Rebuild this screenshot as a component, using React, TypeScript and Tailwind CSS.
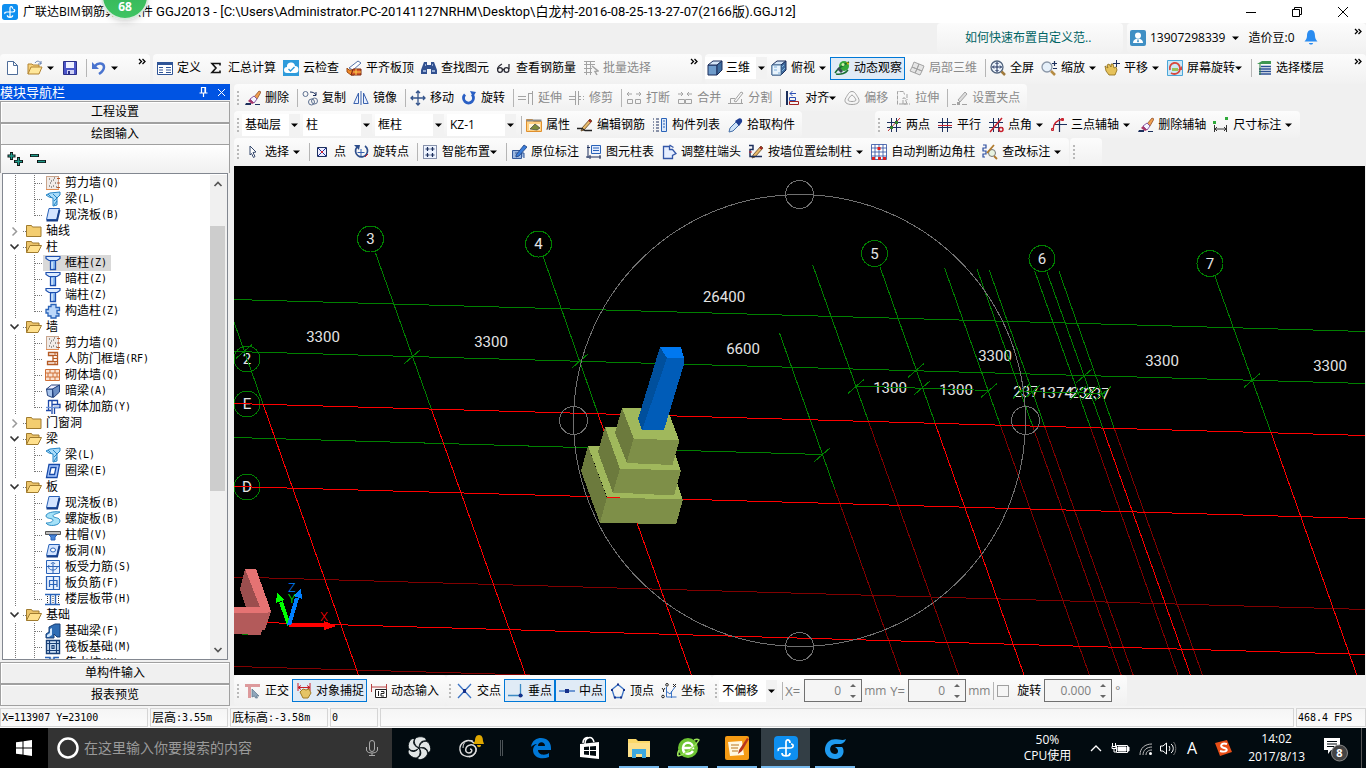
import { ReactNode, useState } from 'react';
import clsx from 'clsx';

const K = '#1c2f5c'; // navy outline used by most toolbar icons
const B = '#2a63b8';
const G = '#a3a3a3';
const R = '#c8202c';

const pencil = (
  <>
    <path d="M5 11L13 2l2 2-8 9-3 1z" fill="#e8b96a" stroke="#5a4020" strokeWidth=".8" />
    <path d="M12 3l2 2" stroke="#a02020" strokeWidth="2" />
  </>
);
const brush = (
  <>
    <path d="M9 7l5-6 2 1-4 7z" fill="#f0a050" stroke="#84411c" strokeWidth=".7" />
    <path d="M5 9l4-3 3 3-3 4z" fill="#f4f4ff" stroke="#7d4b9b" strokeWidth=".9" />
    <path d="M5 9l4 4-2 1-4-3z" fill="#a83768" />
    <path d="M1 13h5v2H0z" fill={K} />
    <path d="M10 14.500h5" stroke={K} />
  </>
);
const axes = <path d="M5.500 1v14M10.500 1v14M1 5.500h14M1 10.500h14" stroke={K} fill="none" />;
const column = (
  <>
    <path d="M5.500 5h5v9.500h-5z" fill="#8dbcf2" stroke="#1d4fae" strokeWidth="1.300" />
    <path d="M1 1.500h14v2l-3 2H4l-3-2z" fill="#dcecff" stroke="#1d4fae" strokeWidth="1.200" />
    <path d="M7 7v7" stroke="#fff" />
  </>
);
const shearWall = (
  <>
    <rect x="1.500" y="1.500" width="12" height="13" fill="#f1ebe7" stroke="#c9a58c" />
    <path d="M1 14.500h13" stroke="#e08a50" />
    <path d="M4 4h1M8 5h1M5 8h1M10 8h1M4 11h1M8 11h1M11 12h1M6 6h1M9 3h1M6 12h1" stroke="#444" />
    <path d="M12 3.500h3M12 8h3M12 12.500h3" stroke="#b5542a" />
  </>
);
const beam = (
  <>
    <path d="M1 4l4-2 10-1v3l-3 3v7l-4 1V7L4 6z" fill="#a9dcfa" stroke="#2684c4" />
    <path d="M3 3l4 4M8 3l4 4M9 10l3-3M9 14l3-4" stroke="#2684c4" />
  </>
);
const slab = (
  <>
    <path d="M4 1.500h10.500L12 12.500H1.500z" fill="#d3e4ff" stroke={B} />
    <path d="M1.500 13.500H12L14.500 3" stroke="#173f8a" strokeWidth="2" />
  </>
);
const cube = (
  <>
    <path d="M1 5h9v10H1z" fill="#6f9ccb" stroke={K} />
    <path d="M1 5l5-4h9l-5 4z" fill="#d5e6f7" stroke={K} />
    <path d="M10 5l5-4v9l-5 5z" fill="#3f6c9e" stroke={K} />
  </>
);

const icons: Record<string, ReactNode> = {
  file: <path d="M3.500 1.500h6l4 4v9h-10zM9.500 1.500v4h4" fill="#fff" stroke="#4f6d99" />,
  open: (
    <>
      <path d="M1 14V4h4l1 1h6v3" fill="#f7d27c" stroke="#b38433" />
      <path d="M1 14l3-7h11l-3 7z" fill="#ffe79a" stroke="#b38433" />
      <path d="M8 3c2-3 5-2 6 1M14 1v3h-3" fill="none" stroke="#6480b0" />
    </>
  ),
  save: (
    <>
      <path d="M1.500 1.500h13v13h-13z" fill="#4b55c8" stroke="#2b2f86" />
      <path d="M4 2h8v6H4z" fill="#eef0ff" />
      <path d="M5 10h7v4H5z" fill="#cfd2f5" />
      <path d="M6 11h2v3H6z" fill="#2b2f86" />
    </>
  ),
  undo: (
    <>
      <path d="M4 6c3-4 9-3 9 1 0 3-2 5-5 7" fill="none" stroke="#4a74cf" strokeWidth="2.500" />
      <path d="M1 2v7h7z" fill="#4a74cf" />
    </>
  ),
  define: (
    <>
      <path d="M.5 2.500h15v12H.5z" fill="#fff" stroke="#2f5597" />
      <path d="M0 2h16v3H0z" fill="#2f5597" />
      <path d="M2 7.500h4M2 10h4M2 12.500h4M9 7.500h5M9 10h5M9 12.500h5" stroke="#2f5597" />
    </>
  ),
  sigma: <path d="M12 5.500V3.500H4l4 4.500-4 4.500h8v-2" fill="none" stroke="#111" strokeWidth="1.600" />,
  cloud: (
    <>
      <path d="M0 0h16v16H0z" fill="#2e9bdb" />
      <path d="M4 13a3 3 0 010-6 4 4 0 018-1 3.500 3.500 0 010 7z" fill="#fff" />
      <path d="M5.500 9l2 2 4-4" stroke="#2e9bdb" fill="none" strokeWidth="1.400" />
    </>
  ),
  align: (
    <>
      <path d="M3 8L12 1l3 2-8 7z" fill="#fff" stroke="#5573a8" />
      <path d="M1 8v4l4 3h3v-5H3z" fill="#f28a28" stroke="#9c4b14" />
      <path d="M7 9h8v6H5z" fill="#d4572b" stroke="#7c2c12" />
      <path d="M10 9v6M7 12h8" stroke="#ffd24d" />
    </>
  ),
  find: (
    <>
      <path d="M3 2h3v3h4V2h3l3 8v4h-6V9H6v5H0v-4z" fill="#31508f" />
      <path d="M2 11h3M11 11h3M4 5h1M11 5h1" stroke="#b6c9ec" strokeWidth="1.500" />
    </>
  ),
  glasses: (
    <g fill="none" stroke="#2b2b35" strokeWidth="1.300">
      <circle cx="4" cy="10" r="2.400" />
      <circle cx="10.500" cy="10" r="2.400" />
      <path d="M1.500 9C2 6 4 5 6 4M13 9V4M6.500 9.500h2" />
    </g>
  ),
  batch: (
    <g fill="none" stroke={G}>
      <path d="M1 1.500h11M1 4.500h11M1 8.500h8M1 12.500h8M3.500 1v14M7.500 1v14" />
      <path d="M9 6l6 5-3 .5 2 3.500" strokeWidth="1.500" />
    </g>
  ),
  cube,
  topView: (
    <>
      {cube}
      <path d="M1 5h9v10H1z" fill="#e8f3fc" stroke="#4c779f" />
      <path d="M3 7h3M3 10h3M7 13h2M11 7l2-2M11 11l3-3" stroke="#7fb0dc" />
    </>
  ),
  orbit: (
    <>
      <circle cx="10" cy="6" r="5" fill="#35a83c" />
      <path d="M1 13c3-5 8-8 14-11M2 14c5 1 10-1 12-4" fill="none" stroke="#1b6e34" strokeWidth="1.500" />
      <circle cx="9" cy="4.500" r="1.500" fill="#cff3a8" />
      <path d="M3 9l4 4 2-2-4-4z" fill="#3b4a54" />
      <path d="M12 2l3 1-1 2z" fill="#e8b500" />
    </>
  ),
  localCube: (
    <g fill="#e5e5e5" stroke={G}>
      <path d="M5 2l5 2-2 5-5-2zM10 4l5 2-2 5-5-2zM3 7l5 2-2 4-5-2zM8 9l5 2-2 4-5-2z" />
    </g>
  ),
  fullscreen: (
    <>
      <circle cx="7" cy="7" r="6" fill="#eef5fc" stroke="#51637d" strokeWidth="1.300" />
      <path d="M11.500 11.500L15 15" stroke="#a07a3c" strokeWidth="2.500" />
      <path d="M7 2.500v9M2.500 7h9M5.500 4L7 2.500 8.500 4M5.500 10L7 11.500 8.500 10M4 5.500L2.500 7 4 8.500M10 5.500L11.500 7 10 8.500" stroke={K} fill="none" />
    </>
  ),
  zoom: (
    <>
      <circle cx="6" cy="7" r="5" fill="#e6f0fa" stroke="#8b97a8" strokeWidth="1.300" />
      <path d="M10 11l4 4" stroke="#b58b42" strokeWidth="2.500" />
      <path d="M11 3.500h5M13.500 1v5M12 8.500h4" stroke={K} strokeWidth="1.200" />
    </>
  ),
  pan: (
    <>
      <path d="M1 6l3 2-1-3 2-1 2 3 0-3 2 0 1 4 2-1 1 3-2 5H5L2 11z" fill="#e6c25b" stroke="#8b6914" strokeWidth=".8" />
      <path d="M12.500 0v7M9 3.500h7" stroke={K} />
    </>
  ),
  screenRotate: (
    <>
      <path d="M.5.500h15v15H.5z" fill="#cde8f7" stroke="#4aa6d8" />
      <path d="M3 10c-2-8 9-10 10-2M13 8c0 6-6 7-9 5" fill="none" stroke="#d8483e" strokeWidth="1.800" />
      <path d="M5 8h6v3H5z" fill="#9ac45a" />
      <path d="M15 6v4h-4z" fill="#d8483e" />
    </>
  ),
  floors: (
    <>
      <path d="M1 4l5-3h9v3z" fill="#3f9650" />
      <path d="M5 6.500h10M3 9h12M3 11.500h12M3 14h12" stroke="#2b4f94" strokeWidth="1.500" />
      <path d="M4 4v11" stroke="#2b7a3c" />
    </>
  ),
  brush,
  copy: (
    <g fill="none" stroke="#5d7090">
      <circle cx="3.500" cy="4" r="2.500" />
      <circle cx="9.500" cy="12" r="3" />
      <circle cx="12.500" cy="11" r="3" />
      <path d="M8 2c3 0 5 1 6 3M14 2v3.500h-3" stroke={K} />
    </g>
  ),
  mirror: (
    <g fill="none" stroke="#3b62ad">
      <path d="M5.500 3v10.500H.8zM10.500 3v10.500h4.700z" fill="#e8f0ff" />
      <path d="M8 1v14" />
    </g>
  ),
  move: <path d="M8 1v14M1 8h14M6 3l2-2 2 2M6 13l2 2 2-2M3 6L1 8l2 2M13 6l2 2-2 2" fill="none" stroke="#35558c" strokeWidth="1.300" />,
  rotate: (
    <>
      <path d="M4 4.500a5 5 0 107 0" fill="none" stroke="#2a5fc4" strokeWidth="2.800" />
      <path d="M9 1l6 1-3 5z" fill="#2a5fc4" />
    </>
  ),
  extend: <path d="M0 6.500h8M0 9.500h8M10.500 3v11M14.500 1v14M11 3.500h3" stroke={G} fill="none" />,
  trim: <path d="M0 6.500h6M0 9.500h6M6.500 1v14M9.500 1v14M10 6.500h2M10 9.500h2M14 6.500h1M14 9.500h1" stroke={G} fill="none" />,
  breakIt: <path d="M1 4h5M10 4h5M3 2L1 4l2 2M13 2l2 2-2 2M1.500 9.500h5v4h-5zM9.500 9.500h5v4h-5z" stroke={G} fill="none" />,
  merge: <path d="M1 4h5M10 4h5M4 2l2 2-2 2M12 2l-2 2 2 2M1.500 9.500h6v4h-6zM8.500 9.500h6v4h-6z" stroke={G} fill="none" />,
  split: <path d="M0 13.500h15M2.500 13V8.500H7M6 11l7-9 2 1-7 9zM13.500 9v5" stroke={G} fill="none" />,
  alignTo: (
    <g fill="none">
      <path d="M2 1v14" stroke={K} strokeWidth="2" />
      <path d="M5 3.500h6M7.500 1L5 3.500 7.500 6" stroke="#2c50b4" />
      <path d="M4.500 7.500h6v3h-6z" stroke="#2c50b4" />
      <path d="M4.500 11.500h9v3h-9z" stroke="#a02020" />
    </g>
  ),
  offset: <path d="M8 1.500c3 0 4 3 6 6 3 5-1 7-6 7s-9-2-6-7c2-3 3-6 6-6zM8 5c1 0 4 4 4 5 0 2-8 2-8 0 0-1 3-5 4-5z" stroke={G} fill="none" />,
  stretch: <path d="M2.500 14.500v-13h6l1 3M8 14V8h2l2 6zM4 14h11M12 4v6" stroke={G} fill="none" strokeDasharray="4 1" />,
  grip: (
    <>
      <path d="M0 14.500h4M10 14.500h5" stroke={G} />
      <path d="M6 10l7-8 2 2-7 8z" fill="#ddd" stroke={G} />
      <path d="M5 12h3v3H5z" fill={G} />
    </>
  ),
  props: (
    <>
      <path d="M.5 2.500h6l1 2h8v10H.5z" fill="#ffd183" stroke="#e08f2c" />
      <path d="M.5 2.500h15v2H.5z" fill="#8a8a8a" />
      <path d="M3 7h11v6H3z" fill="#fff6dd" />
      <path d="M4 12l5-5 5 4-3 2z" fill="#7d8a3c" stroke="#444" strokeWidth=".7" />
    </>
  ),
  editBar: (
    <>
      {pencil}
      <path d="M0 11.500h5l3 2h7" fill="none" stroke="#222" strokeWidth="1.300" />
    </>
  ),
  list: (
    <>
      <path d="M1 2h1M4 2h3M1 5h1M4 5h3M1 8h1M4 8h3M1 11h1M4 11h3M1 14h1M4 14h3" stroke={K} />
      <path d="M9.500 1.500h5v13h-5z" fill="#dce8f8" stroke={B} />
      <path d="M11 4h2M11 7h2M11 10h2" stroke={B} />
    </>
  ),
  pick: (
    <>
      <path d="M2 15l1-4 6-6 3 3-6 6z" fill="#cfe3f8" stroke="#456fa8" />
      <path d="M8 4l4 5 3-4c1-3-2-5-4-3z" fill="#1f3f93" />
    </>
  ),
  twoPoint: (
    <>
      {axes}
      <path d="M2 14L14 1" stroke="#c23030" />
      <path d="M4 9h3v3H4zM9 4h3v3H9z" fill="#357d2c" />
    </>
  ),
  parallel: (
    <>
      {axes}
      <path d="M1 8.500h14" stroke={R} />
    </>
  ),
  pointAngle: (
    <>
      {axes}
      <path d="M2 15L14 1" stroke={R} strokeWidth="1.500" />
      <circle cx="13" cy="12.500" r="2" fill="none" stroke={R} strokeWidth="1.500" />
    </>
  ),
  threePoint: (
    <>
      <path d="M8.500 1v14M4 7.500h12" stroke={K} strokeWidth="1.200" />
      <path d="M2 13C2 7 6 3 12 2" fill="none" stroke={R} strokeWidth="1.300" />
      <path d="M.5 11.500h2v2h-2zM10.500 1.500h2v2h-2z" fill="none" stroke={R} />
    </>
  ),
  dimension: (
    <>
      <path d="M1.500 8v7M13.500 8v7M2 12h11M4 10l-2 2 2 2M11 10l2 2-2 2" fill="none" stroke="#333" />
      <path d="M0 4h3v3H0zM12 0h3v3h-3z" fill="#2faa3a" />
    </>
  ),
  cursor: <path d="M5 2l6 6-3 .500 2 4-1.500 1-2-4L5 11z" fill="#fff" stroke="#33466b" />,
  point: (
    <>
      <path d="M3.500 3.500h9v9h-9z" fill="#eef" stroke={K} />
      <path d="M4 4l8 8M12 4l-8 8" stroke="#1c2f9c" />
      <path d="M7 7h2v2H7z" fill={R} />
    </>
  ),
  rotatePoint: (
    <>
      <path d="M4 3a6 6 0 108-1" fill="none" stroke="#2c4c8a" strokeWidth="1.700" />
      <path d="M1 1l6 0-1 5z" fill="#2c4c8a" />
      <path d="M8 5v7M4.500 8.500h7" stroke="#355fae" />
      <path d="M12 13l3-3" stroke={R} />
    </>
  ),
  smart: (
    <>
      <path d="M1.500 1.500h13v13h-13z" fill="#eef4ff" stroke={K} strokeDasharray="1 1" />
      <path d="M5.500 3v4M3.500 5h4M10.500 3v4M8.500 5h4M5.500 9v4M3.500 11h4M10.500 9v4M8.500 11h4" stroke={K} strokeWidth="1.200" />
    </>
  ),
  inPlace: (
    <>
      <path d="M1.500 6.500h9v8h-9zM4 9h9v5" fill="#9cb8e0" stroke="#345a9b" />
      <path d="M5 11l8-10 3 2-8 9-3 1z" fill="#3b7dd8" stroke="#1c3c7c" strokeWidth=".8" />
    </>
  ),
  columnTable: (
    <>
      <path d="M5.500 1.500h9v8h-9z" fill="#e3edff" stroke={B} />
      <path d="M7 4h6M7 6.500h6" stroke={B} />
      <path d="M2 1v13M1 3.500h3M0 13h15M4 11v4M14 11v4" stroke={K} />
    </>
  ),
  columnEnd: <path d="M2.500 2.500h6v3h3l3.500 4-3.500 2v3h-9zM8.500 1l4 2.500" fill="#e6eeff" stroke="#3457a8" strokeWidth="1.300" />,
  byWall: (
    <>
      {pencil}
      <path d="M1 1.500h4v4H2v7h12" fill="none" stroke={K} strokeWidth="1.500" />
      <path d="M1 8h3" stroke={R} />
    </>
  ),
  cornerColumn: (
    <>
      <path d="M.5.500h15v15H.5zM.5 4h15M.5 8h15M.5 12h15M4 .5v15M8 .5v15M12 .5v15" fill="#fff" stroke="#2b4da0" strokeWidth=".8" />
      <path d="M6.500 3h3v3h-3zM1 13h3v3H1zM7 13h3v3H7zM12 13h3v3h-3z" fill="#e02020" />
    </>
  ),
  checkMark: (
    <>
      <path d="M1 1h3v3H1v3h3v3H1v3h2" fill="none" stroke="#2b4da0" strokeWidth="1.200" />
      <circle cx="10" cy="9" r="3.500" fill="#e8f3e0" stroke="#777" />
      <path d="M12 12l3 3M5 9l7-8" stroke="#b07a2c" strokeWidth="1.800" />
    </>
  ),
  ortho: (
    <>
      <path d="M0 1h15v3H6v11H3V4H0z" fill="#dd9a9c" />
      <path d="M7 6l7 7-2.500 0 1 2-2 0-1-2L7 14z" fill="#8fa6bb" stroke="#5c7288" strokeWidth=".7" />
    </>
  ),
  snap: (
    <>
      <path d="M2 0v8M14 0v8M2 4.500h12M5 2.500L2 4.500l3 2M11 2.500l3 2-3 2" fill="none" stroke={R} />
      <path d="M4 9l3-3 3 1 3-1 2 4-3 5H7z" fill="#e5c466" stroke="#a07c26" />
    </>
  ),
  dynInput: (
    <>
      <path d="M.5 1v8M15.500 1v8M1 4h14" stroke="#b84444" />
      <path d="M4.500 6.500h11v8h-11z" fill="#fff" stroke="#222" />
      <path d="M7.500 8v5M10 8.500h3v2h-3v2.500h3" fill="none" stroke="#222" />
    </>
  ),
  cross: (
    <>
      <path d="M1 1l13 14M14 1L1 15" stroke="#3b73c4" strokeWidth="1.300" />
      <path d="M6 6h3v4H6z" fill="#15308a" />
    </>
  ),
  perpendicular: (
    <>
      <path d="M0 12.500h15M12.500 1v12" stroke="#3b8ac4" strokeWidth="1.300" />
      <circle cx="12.500" cy="12.500" r="2" fill="#15308a" />
    </>
  ),
  midpoint: (
    <>
      <path d="M0 8h16" stroke="#3b73c4" strokeWidth="1.400" />
      <path d="M6 6h4v4H6z" fill="#15308a" />
    </>
  ),
  vertex: (
    <>
      <path d="M8 1.500l6 5-2.500 8h-7L2 6.500z" fill="none" stroke="#3b73c4" strokeWidth="1.300" />
      <path d="M7 .5h2v2H7zM1 6h2v2H1zM13 6h2v2h-2zM4 13.500h2v2H4zM10 13.500h2v2h-2z" fill="#15308a" />
    </>
  ),
  coord: (
    <g fill="none" stroke="#3b73c4">
      <path d="M5.500 4v10h10M5 8l4 3 5-7M10.500 8v7" />
      <path d="M1 5l1.500 2L4 5M2.500 7v2M12 1l3 3M15 1l-3 3" stroke="#222" />
      <circle cx="6" cy="1.800" r="1.300" stroke="#222" />
      <circle cx="2" cy="13.500" r="1.300" stroke="#222" />
    </g>
  ),
  user: (
    <>
      <rect width="16" height="16" rx="2" fill="#3f8fc4" />
      <circle cx="8" cy="5.500" r="3" fill="#fff" />
      <path d="M3 13c0-6 10-6 10 0z" fill="#fff" />
      <path d="M8 8.500l1 3-1 1-1-1z" fill="#3f8fc4" />
    </>
  ),
  bell: <path d="M8 0c3 0 4 3 4 6 0 2 1 4 2.500 5.500h-13C3 10 4 8 4 6c0-3 1-6 4-6zM6 13h4c0 2-4 2-4 0z" fill="#2a8cf0" />,
  plus: (
    <>
      <path d="M4.500 1v8M.5 5h8M11.500 6v9M7 10.500h9" stroke="#111" strokeWidth="3" />
      <path d="M4.500 2v6M1.500 5h6M11.500 7v7M8 10.500h7" stroke="#1f9a8a" strokeWidth="1.400" />
    </>
  ),
  minus: (
    <>
      <path d="M0 4.500h9M7 10.500h9" stroke="#111" strokeWidth="3" />
      <path d="M1 4.500h7M8 10.500h7" stroke="#1f9a8a" strokeWidth="1.400" />
    </>
  ),
  folder: <path d="M.5 13.500v-11h5l1 1.500h8.500v9.500z" fill="#f3cd70" stroke="#a07b2e" />,
  folderOpen: (
    <>
      <path d="M.5 13.500v-11h5l1 1.500h6.500v3" fill="#ecc46a" stroke="#a07b2e" />
      <path d="M.5 13.500l3.500-7h11.500l-3.500 7z" fill="#ffe08c" stroke="#a07b2e" />
    </>
  ),
  shearWall,
  beam,
  slab,
  column,
  structColumn: <path d="M6 1.500h5v3h3.500v3H12v3h2v2.500h-3V15H6v-2H3v-3H1V6.500h2.500v-3H6z" fill="#bcd8fb" stroke={B} strokeWidth="1.300" />,
  doorWall: (
    <>
      <path d="M3.500 1.500h9v12h-10v-3H8v-6H3.500z" fill="#fff0e6" stroke="#b55a24" strokeWidth="1.300" />
      <path d="M8 4.500h4M8 7.500h4M8 10.500h4M10 11v3M10 2v2" stroke="#b55a24" />
    </>
  ),
  brickWall: (
    <path d="M.5 2.500h14v11H.5zM.5 6h14M.5 10h14M5 2.500V6M10 2.500V6M3 6v4M8 6v4M12 6v4M5 10v3.500M10 10v3.500" fill="#fbe3d2" stroke="#cf7038" />
  ),
  hiddenBeam: (
    <>
      <path d="M1.500 6h6v8.500l-5-2z" fill="#a5c2ea" stroke="#24427e" />
      <path d="M1.500 6l5-4h8l-6 4z" fill="#eef" stroke="#24427e" />
      <path d="M7.500 6l7-4v7l-6 5.500z" fill="#6c8ec4" stroke="#24427e" />
    </>
  ),
  brickRebar: (
    <g fill="none" stroke="#1d48a8" strokeWidth="1.300">
      <path d="M3.500 1.500h9v4H15v3H9.500V15M3.500 1v10M1 11.500h5M7 5.500h5M7 2v13" />
      <path d="M1 8.500h13" stroke="#6e93d8" />
    </g>
  ),
  ringBeam: <path d="M4 1.500h10.500L12 14.500H1.500zM6 4.500h5L9.500 11.500h-5z" fill="#a9c8ff" fillRule="evenodd" stroke="#174aa8" strokeWidth="1.300" />,
  spiral: <path d="M15 1C8 0 1 2 1 5s7 2 7 4-4 3-7 3c2 4 14 3 14-2 0-4-7-3-7-5s4-2 7-4z" fill="#a5e2f8" stroke="#2b8cc4" />,
  cap: (
    <>
      <path d="M.5 4.500h15v3H.5z" fill="#bbb" stroke="#555" />
      <path d="M4 8h8l-2 2v3H6v-3z" fill="#4a86d8" stroke={B} />
    </>
  ),
  slabHole: (
    <>
      {slab}
      <ellipse cx="8" cy="7" rx="2.500" ry="2" fill="#fff" stroke={B} />
    </>
  ),
  slabBar: (
    <>
      <path d="M1.500 1.500h13v13h-13z" fill="#e6f0ff" stroke={B} />
      <path d="M2 7.500h12M8 4v10M4 6c-3 6 9 7 8 1M6 5c1-2 3-2 4 0" fill="none" stroke={B} />
    </>
  ),
  slabNeg: <path d="M1.500 1.500h13v13h-13zM4.500 6v6M4 5.500h8V12M4 9.500h8M8.500 2v12" fill="#e6f0ff" stroke={B} strokeWidth="1.200" />,
  strip: (
    <>
      <path d="M0 3.500h15M0 13.500h15M5.500 4v9M10.500 4v9" stroke={B} strokeWidth="1.400" />
      <path d="M2.500 5v8M8 5v8M13.500 5v8" stroke="#333" strokeDasharray="1 1" />
    </>
  ),
  foundBeam: (
    <>
      <path d="M1 15v-4l3-2V4l6-3h5v13h-3l-3-3v4z" fill="#2f6db4" stroke="#173f77" />
      <path d="M5 6l2-1v7l-3 2H2v-2l3-2z" fill="#d5e8fb" />
    </>
  ),
  raft: (
    <>
      <path d="M1.500 1.500h13v13h-13z" fill="#cfe2f7" stroke="#173f77" strokeWidth="1.400" />
      <path d="M1 4.500h14M1 11.500h14M4.500 1v14M11.500 1v14M7 6.500h2v3H7z" fill="none" stroke="#173f77" strokeWidth="1.200" />
    </>
  ),
  pit: <path d="M0 2.500h5v4h4v-4h5M2 8h12v6H2z" fill="#cfe2f7" stroke={B} strokeWidth="1.500" />,
};

function Icon({ name }: { name: string }) {
  return (
    <svg className="h-4 w-4 shrink-0" viewBox="0 0 16 16" fill="none" aria-hidden="true">
      {icons[name]}
    </svg>
  );
}

function Arrow({ tight }: { tight?: boolean }) {
  return (
    <svg className={clsx('h-2 w-2 shrink-0', tight && '-ml-1')} viewBox="0 0 8 8" aria-hidden="true">
      <path d="M0 2.500h7L3.500 6z" fill="#000" />
    </svg>
  );
}

type ToolProps = {
  icon: string;
  label?: string;
  drop?: boolean;
  tight?: boolean;
  off?: boolean;
  active?: boolean;
};

function Tool({ icon, label, drop, tight, off, active }: ToolProps) {
  return (
    <button
      type="button"
      disabled={off}
      aria-label={label || icon}
      className={clsx(
        'flex h-[23px] shrink-0 items-center gap-1 whitespace-nowrap pl-1 pr-[3px]',
        off ? 'text-[#8a8a8a]' : 'text-black',
        active && 'bg-[#e0ebf6] outline outline-1 -outline-offset-1 outline-[#0078d7]',
      )}
    >
      <Icon name={icon} />
      {label}
      {drop && <Arrow tight={tight} />}
    </button>
  );
}

function Sep() {
  return <span className="ml-[5px] h-[18px] w-px shrink-0 bg-[#b5b5b5]" />;
}

function Grip() {
  return (
    <span className="flex w-1 shrink-0 flex-col gap-[2px]">
      {[0, 1, 2, 3].map((i) => (
        <span key={i} className="h-[2px] w-[2px] bg-[#b9b9b9]" />
      ))}
    </span>
  );
}

function Bar({ children, className, grip = true }: { children?: ReactNode; className?: string; grip?: boolean }) {
  return (
    <div
      className={clsx(
        'flex items-center rounded-sm bg-gradient-to-b from-[#fcfcfc] to-[#f1f1f1] pr-1',
        grip && 'pl-[3px]',
        className,
      )}
    >
      {grip && <Grip />}
      {children}
    </div>
  );
}

function More() {
  return (
    <svg className="mb-3 h-2 w-2 shrink-0" viewBox="0 0 8 8" fill="none" stroke="#000" strokeWidth="1.300" aria-hidden="true">
      <path d="M1 1l2.500 2.500L1 6M4.500 1L7 3.500 4.500 6" />
    </svg>
  );
}

function Combo({ value, label, className }: { value: string; label: string; className: string }) {
  return (
    <span className={clsx('flex h-[22px] shrink-0 items-center bg-white', className)}>
      <select aria-label={label} className="w-0 flex-1 appearance-none bg-transparent pl-[3px] outline-none">
        <option>{value}</option>
      </select>
      <span className="flex h-full w-[11px] shrink-0 items-center justify-center bg-[#f2f2f2]">
        <Arrow />
      </span>
    </span>
  );
}

function Spin({ label, value, className }: { label: string; value: string; className: string }) {
  return (
    <span className={clsx('flex h-[23px] shrink-0 items-center border border-[#707070] bg-[#f5f5f5] pr-1', className)}>
      <input aria-label={label} defaultValue={value} className="w-0 flex-1 bg-transparent pr-2 text-right text-[#808080] outline-none" />
      <svg className="h-4 w-2" viewBox="0 0 8 16" fill="#666" aria-hidden="true">
        <path d="M1 4l3-3 3 3zM1 12l3 3 3-3z" />
      </svg>
    </span>
  );
}

type Node = { name: string; key?: string; icon?: string; folder?: 'open' | 'closed'; last?: boolean };

const tree: Node[] = [
  { name: '剪力墙', key: 'Q', icon: 'shearWall' },
  { name: '梁', key: 'L', icon: 'beam' },
  { name: '现浇板', key: 'B', icon: 'slab', last: true },
  { name: '轴线', folder: 'closed' },
  { name: '柱', folder: 'open' },
  { name: '框柱', key: 'Z', icon: 'column' },
  { name: '暗柱', key: 'Z', icon: 'column' },
  { name: '端柱', key: 'Z', icon: 'column' },
  { name: '构造柱', key: 'Z', icon: 'structColumn', last: true },
  { name: '墙', folder: 'open' },
  { name: '剪力墙', key: 'Q', icon: 'shearWall' },
  { name: '人防门框墙', key: 'RF', icon: 'doorWall' },
  { name: '砌体墙', key: 'Q', icon: 'brickWall' },
  { name: '暗梁', key: 'A', icon: 'hiddenBeam' },
  { name: '砌体加筋', key: 'Y', icon: 'brickRebar', last: true },
  { name: '门窗洞', folder: 'closed' },
  { name: '梁', folder: 'open' },
  { name: '梁', key: 'L', icon: 'beam' },
  { name: '圈梁', key: 'E', icon: 'ringBeam', last: true },
  { name: '板', folder: 'open' },
  { name: '现浇板', key: 'B', icon: 'slab' },
  { name: '螺旋板', key: 'B', icon: 'spiral' },
  { name: '柱帽', key: 'V', icon: 'cap' },
  { name: '板洞', key: 'N', icon: 'slabHole' },
  { name: '板受力筋', key: 'S', icon: 'slabBar' },
  { name: '板负筋', key: 'F', icon: 'slabNeg' },
  { name: '楼层板带', key: 'H', icon: 'strip', last: true },
  { name: '基础', folder: 'open' },
  { name: '基础梁', key: 'F', icon: 'foundBeam' },
  { name: '筏板基础', key: 'M', icon: 'raft' },
  { name: '集水坑', key: 'K', icon: 'pit' },
];

const MONO = "font-['DejaVu_Sans_Mono','Noto_Sans_CJK_SC',monospace] text-[10px]";

function TreeRow({ node, selected, onSelect }: { node: Node; selected: boolean; onSelect: () => void }) {
  if (node.folder) {
    return (
      <button type="button" className="flex h-4 shrink-0 items-center text-left">
        <svg className="h-4 w-[23px]" viewBox="0 0 23 16" fill="none" aria-hidden="true">
          {node.folder === 'open' ? (
            <path d="M7.500 5.500l4 4 4-4" stroke="#333" strokeWidth="1.700" />
          ) : (
            <path d="M9.500 4.500l4 4-4 4" stroke="#999" strokeWidth="1.500" />
          )}
          <path d="M20 8.500h3" stroke="#777" strokeDasharray="1 1" />
        </svg>
        <Icon name={node.folder === 'open' ? 'folderOpen' : 'folder'} />
        <span className="pl-1">{node.name}</span>
      </button>
    );
  }
  return (
    <button type="button" onClick={onSelect} className="flex h-4 shrink-0 items-center text-left">
      <svg className="h-4 w-10" viewBox="0 0 40 16" fill="none" stroke="#777" strokeDasharray="1 1" aria-hidden="true">
        <path d={`M12.500 0v16M31.500 0v${node.last ? 9 : 16}M32 8.500h8`} />
      </svg>
      <span className={clsx('flex h-4 items-center pl-[2px] pr-1', selected && 'bg-[#d9d9d9]')}>
        <Icon name={node.icon!} />
        <span className="pl-1">{node.name}</span>
        <span className={MONO}>({node.key})</span>
      </span>
    </button>
  );
}

function Sidebar() {
  const [selected, setSelected] = useState(5);
  const tab = 'h-[22px] shrink-0 border border-[#a0a0a0] bg-[#f0f0f0] shadow-[inset_1px_1px_0_#fff]';
  return (
    <aside className="flex w-[230px] shrink-0 flex-col">
      <header className="mb-px flex h-4 shrink-0 items-center bg-[#0054e3] text-white">
        <h2 className="flex-1 text-[13px]">模块导航栏</h2>
        <button type="button" aria-label="pin" className="px-[3px]">
          <svg className="h-3 w-3" viewBox="0 0 12 12" fill="none" stroke="#fff" strokeWidth="1.200">
            <path d="M4.500 6.500v-5h4v5M8 1.500v5M2.500 7h8M6.500 7v4" />
          </svg>
        </button>
        <button type="button" aria-label="close" className="px-[3px]">
          <svg className="h-3 w-3" viewBox="0 0 12 12" fill="none" stroke="#fff">
            <path d="M3 3l7 7M10 3l-7 7" />
          </svg>
        </button>
      </header>
      <button type="button" className={tab}>工程设置</button>
      <button type="button" className={tab}>绘图输入</button>
      <div className="flex h-7 shrink-0 items-center gap-1 border-x border-[#a0a0a0] bg-gradient-to-b from-white to-[#f0f0f0] px-[6px]">
        <button type="button" aria-label="expand"><Icon name="plus" /></button>
        <button type="button" aria-label="collapse" className="pl-[3px]"><Icon name="minus" /></button>
      </div>
      <div className="mx-[2px] mb-[2px] flex min-h-0 flex-1 border border-[#828790] bg-white pt-px">
        <nav className="flex min-w-0 flex-1 flex-col overflow-hidden">
          {tree.map((node, i) => (
            <TreeRow key={i} node={node} selected={i === selected} onSelect={() => setSelected(i)} />
          ))}
        </nav>
        <div className="flex w-[17px] flex-col bg-[#f0f0f0]">
          <svg className="mb-[35px] h-4 w-4" viewBox="0 0 16 16" fill="none" stroke="#555" strokeWidth="1.700" aria-hidden="true">
            <path d="M4.500 11l3.500-3.500 3.500 3.500" />
          </svg>
          <span className="h-[265px] w-[15px] bg-[#cdcdcd]" />
          <svg className="mt-auto h-4 w-4" viewBox="0 0 16 16" fill="none" stroke="#555" strokeWidth="1.700" aria-hidden="true">
            <path d="M4.500 5l3.500 3.500L11.500 5" />
          </svg>
        </div>
      </div>
      <button type="button" className={tab}>单构件输入</button>
      <button type="button" className={tab}>报表预览</button>
    </aside>
  );
}

// x1, y1, x2, y2 in window coordinates
const green = [
  [234, 299.5, 1366, 331.5], [234, 351.5, 1366, 383.5], [234, 437.5, 822, 454.5],
  [234, 322, 263, 404], [375.5, 253, 431.3, 409], [543.5, 257.5, 598, 414],
  [880, 267, 935.2, 423.5], [1046.7, 271.5, 1103, 428.5], [1215, 276.5, 1271, 432.5],
  [779.5, 333, 834.7, 489], [812.7, 265, 868.5, 421.5], [944.6, 268, 1000.3, 425],
  [977, 269, 1032.6, 426], [989.2, 270, 1044.5, 426], [1034.7, 271, 1090.5, 427.5],
  [1059, 271.5, 1114.3, 428.5], [855.7, 386, 989, 390.5], [1021, 391.5, 1105, 393.5],
];
const red = [
  [234, 403.5, 1366, 435.5], [234, 486.5, 1366, 518.5], [234, 621.7, 1366, 654.5],
  [263, 404, 358.5, 675], [431.3, 409, 525.5, 675], [598, 414, 691.5, 675],
  [935.2, 423.5, 1024, 675], [1103, 428.5, 1190.5, 675], [1271, 432.5, 1356.8, 675],
];
const darkRed = [
  [234, 577, 1366, 609.5], [234, 666.5, 530, 675], [834.7, 489, 901, 675],
  [868.5, 421.5, 958.6, 675], [1000.3, 425, 1089.4, 675], [1032.6, 426, 1121.2, 675],
  [1044.5, 426, 1133.2, 675], [1090.5, 427.5, 1178, 675], [1114.3, 428.5, 1202.5, 675],
];
const ticks = [
  [244, 351.5], [412.5, 356.5], [580, 361], [916, 370.5], [1084, 376], [1252, 380.5], [822.5, 454.5],
  [856, 386.5], [922, 388], [989, 390.5], [1021, 391.5], [1032, 392], [1078, 393], [1090, 393], [1103, 393.5],
];
const bubbles: [string, number, number][] = [
  ['3', 370.5, 239], ['4', 538.5, 244], ['5', 874.5, 253.5], ['6', 1042, 258.5], ['7', 1210, 263.5],
  ['2', 247, 359], ['E', 247, 404], ['D', 247, 487],
];
const dims: [string, number, number][] = [
  ['3300', 323, 342], ['3300', 491, 347], ['26400', 724, 302], ['6600', 743, 354], ['3300', 995, 361],
  ['3300', 1162, 366], ['3300', 1330, 371], ['1300', 890, 393], ['1300', 956, 395], ['237', 1026, 397],
  ['1374', 1056, 398], ['237', 1083, 398], ['237', 1097, 399],
];

const toPath = (lines: number[][]) => lines.map(([a, b, c, d]) => `M${a} ${b}L${c} ${d}`).join('');

function Viewport() {
  return (
    <div className="mr-px min-h-0 flex-1 overflow-hidden bg-black">
      <svg className="h-full w-full font-['Roboto','Noto_Sans_CJK_SC',sans-serif] text-[15px]" fill="none">
        <g transform="translate(-234 -166)">
          <g fill="#e4e4e4" textAnchor="middle">
            {dims.map(([t, x, y], i) => (
              <text key={i} x={x} y={y}>{t}</text>
            ))}
            {bubbles.map(([t, x, y]) => (
              <text key={t} x={x} y={y + 5}>{t}</text>
            ))}
          </g>
          <g shapeRendering="crispEdges">
            <g stroke="#008000">
              <path d={toPath(green)} />
              <path d={ticks.map(([x, y]) => `M${x - 8} ${y + 7}L${x + 8} ${y - 7}`).join('')} />
              {bubbles.map(([t, x, y]) => (
                <circle key={t} cx={x} cy={y} r="13" />
              ))}
              <circle cx="247" cy="622" r="13" />
            </g>
            <path d={toPath(darkRed)} stroke="#800000" />
            <path d={toPath(red)} stroke="#ff0000" />
            <g stroke="#707070">
              <circle cx="799.5" cy="420.5" r="226" />
              <circle cx="799.5" cy="194.5" r="14" />
              <circle cx="799.5" cy="646.5" r="14" />
              <circle cx="573.5" cy="420.5" r="14" />
              <circle cx="1025.5" cy="420.5" r="14" />
            </g>
            {/* stepped footing */}
            <path d="M588 446h14l75 37 6 17-76-3z" fill="#a0b85c" />
            <path d="M588 446l-7 25 19 52 7-25z" fill="#6c7a3d" />
            <path d="M607 497.500l76 2-7 25-76-2z" fill="#7e8f48" />
            <path d="M605 427h14l56 27 6 17-61-2z" fill="#a0b85c" />
            <path d="M605 427l-7 25 15 41 7-24z" fill="#6c7a3d" />
            <path d="M620 468.500l61 2-7 25-61-3z" fill="#7e8f48" />
            <path d="M622 408h45l12 32-46-1z" fill="#a0b85c" />
            <path d="M622 408l-7 25 12 30 7-24z" fill="#6c7a3d" />
            <path d="M633.500 439l46 1-7 25-46-2z" fill="#7e8f48" />
            {/* column */}
            <path d="M660 347h21l3 11h-17z" fill="#0078f0" />
            <path d="M660 347l7 11-25 72-4-11z" fill="#004f9c" />
            <path d="M667 358h17v6l-20 66h-22z" fill="#005cb8" />
            {/* neighbouring strip */}
            <path d="M245 569l-5 20 6 18h14z" fill="#9b4e4e" />
            <path d="M245 569h11l15 42-5 3h-32v-7h26z" fill="#e57373" />
            <path d="M234 613h33l4-2-6 19h-3l-1 5-27-1z" fill="#b35a5a" />
            {/* axis tripod */}
            <path d="M289 625h38" stroke="#ff0000" strokeWidth="4" />
            <path d="M324 621l12 5-12 4z" fill="#ff0000" />
            <path d="M289 625l-8-23" stroke="#00ff00" strokeWidth="4" />
            <path d="M277 593l7 7-8 3z" fill="#00ff00" />
            <path d="M289 625l8-27" stroke="#0080ff" strokeWidth="4" />
            <path d="M301 588l1 11-8-3z" fill="#0080ff" />
          </g>
          <g textAnchor="middle" fontSize="13" fontWeight="300">
            <text x="324" y="621" fill="#ff0000">X</text>
            <text x="292" y="603" fill="#00ff00">Y</text>
            <text x="292" y="592" fill="#0080ff">Z</text>
          </g>
        </g>
      </svg>
    </div>
  );
}

function TaskIcon({ label, running, active, children }: { label: string; running?: boolean; active?: boolean; children: ReactNode }) {
  return (
    <button type="button" aria-label={label} className={clsx('flex h-10 w-[49px] flex-col items-center', active && 'bg-[#333e45]')}>
      <svg className="mt-2 mb-[6px] h-6 w-6" viewBox="0 0 24 24" fill="none">{children}</svg>
      {running && <span className={clsx('h-[2px] bg-[#76b9ed]', active ? 'w-full' : 'w-10')} />}
    </button>
  );
}

function Taskbar() {
  return (
    <footer className="flex h-10 shrink-0 items-center bg-[#020b10] text-white">
      <button type="button" aria-label="start" className="flex h-full w-12 items-center justify-center bg-black">
        <svg className="h-4 w-4" viewBox="0 0 16 16" fill="#fff">
          <path d="M0 2.300l6.500-.9v6.100H0zM7.500 1.200L16 0v7.500H7.500zM0 8.500h6.500v6.100L0 13.700zM7.500 8.500H16V16l-8.500-1.200z" />
        </svg>
      </button>
      <label className="flex h-full w-[344px] items-center bg-[#333] pl-2">
        <svg className="h-6 w-6" viewBox="0 0 24 24" fill="none" stroke="#fff" strokeWidth="2.500">
          <circle cx="12" cy="12" r="9.500" />
        </svg>
        <input aria-label="search" placeholder="在这里输入你要搜索的内容" className="ml-1 w-0 flex-1 bg-transparent text-sm placeholder-[#9a9a9a] outline-none" />
        <svg className="mr-3 h-4 w-4" viewBox="0 0 16 16" fill="none" stroke="#aaa">
          <path d="M5.500 3a2.500 2.500 0 015 0v6a2.500 2.500 0 01-5 0zM2.500 7v3c0 4 11 4 11 0V7M8 13v3M5 15.500h6" />
        </svg>
      </label>
      <div className="pl-[2px]">
        <TaskIcon label="pinwheel">
          {[0, 72, 144, 216, 288].map((a) => (
            <path key={a} transform={`rotate(${a} 12 12)`} d="M12 12C6 9 6 2 11 1s9 1 8 4c-4-1-7 2-7 7z" fill="#e2e6e6" stroke="#020b10" strokeWidth=".8" />
          ))}
        </TaskIcon>
      </div>
      <button type="button" aria-label="assistant" className="ml-[3px] flex h-10 w-12 items-center justify-center">
        <svg className="h-7 w-7" viewBox="0 0 28 28" fill="none">
          <path d="M18 9C12 3 3 9 4 16c1 7 11 9 15 3 3-5-1-9-5-8-5 1-6 8-1 8 3 0 4-4 1-4" stroke="#ddd" strokeWidth="1.500" />
          <path d="M17 7C11 5 7 8 7 14M20 14c1 6-3 8-7 9" stroke="#ddd" />
          <path d="M23 1c3 0 4 3 4 6l1 3H17l2-3c0-3 1-6 4-6zM21 11h4c0 3-4 3-4 0z" fill="#e0a800" />
        </svg>
      </button>
      <span className="mr-[13px] ml-[6px] h-4 w-[3px] border-x border-[#4c5357]" />
      <TaskIcon label="edge">
        <path d="M2 11C3 4 8 2 12 2c6 0 10 4 10 10v2H9c0 5 7 6 11 3v4C13 24 4 22 4 14c0-3 2-5 4-6-3 0-5 2-6 3zM9 10h7c0-5-7-5-7 0z" fill="#0078d7" />
      </TaskIcon>
      <TaskIcon label="store">
        <path d="M2 8l19-2v17L2 21z" fill="#fff" />
        <path d="M7 8c0-7 7-9 9-2M5 7c0-5 4-6 6-5" stroke="#fff" strokeWidth="1.500" />
        <path d="M6 11l5-.5V14H6zM12 10.500l6-.5v4h-6zM6 15h5v4l-5-.5zM12 15h6v5l-6-.7z" fill="#020b10" />
      </TaskIcon>
      <TaskIcon label="explorer" running>
        <path d="M1 3h8l2 2h12v16H1z" fill="#fbd869" />
        <path d="M1 7h22v14H1z" fill="#fde08a" />
        <path d="M5 13h14v9h-4v-4H9v4H5z" fill="#3da9e0" />
      </TaskIcon>
      <TaskIcon label="browser" running>
        <circle cx="12" cy="12" r="10" fill="#6cc332" />
        <path d="M7 12h10c0-7-10-7-10 0s7 7 10 3" stroke="#fff" strokeWidth="2.500" />
        <path d="M2 20C8 19 19 11 23 4c-1-1-3-1-5 0M2 20c-1-2 0-4 1-6" stroke="#9be35a" strokeWidth="1.500" />
      </TaskIcon>
      <TaskIcon label="notes" running>
        <rect x="0" y="0" width="24" height="24" rx="2" fill="#f59b14" />
        <path d="M3 6l14-1 2 14-14 1z" fill="#fff8e2" />
        <path d="M6 9h8M6 12h7M7 15h6" stroke="#b8741f" />
        <path d="M22 2l-8 12-1 4 4-3 7-12z" fill="#b8351c" />
      </TaskIcon>
      <TaskIcon label="GGJ2013" running active>
        <rect width="24" height="24" rx="4" fill="#0e8ff0" />
        <path d="M16 7c0-4-4-4-4-1v14M4.500 15c-1-2 0-3 3-3H16c4 0 4-4 1-4M8 17c0 4 8 4 8 0" stroke="#fff" strokeWidth="1.700" />
      </TaskIcon>
      <TaskIcon label="glodon" running>
        <path d="M23 3c-5 3-12-3-18 3C-2 14 4 24 13 23c8-1 9-9 6-12h-7c4 2 4 7 0 7-6 0-7-9 0-10 4 0 9 1 11-5z" fill="#1f9bf0" />
      </TaskIcon>
      <div className="ml-auto flex h-full items-center text-xs">
        <div className="mr-[19px] text-center leading-4">
          <div>50%</div>
          <div>CPU使用</div>
        </div>
        <svg className="h-4 w-[142px]" viewBox="0 0 142 16" fill="none" stroke="#fff" aria-hidden="true">
          <path d="M1 11l5-5 5 5" strokeWidth="1.300" />
          <path d="M26.500 5.500h11v7h-11z" />
          <path d="M28 7h8v4h-8zM38 7h1v4h-1z" fill="#fff" />
          <path d="M22.500 3v3M25.500 3v3M22 6.500h4v2h-4zM24 9v3h2" />
          <path d="M50 15C50 8 55 4 62 4M53 15c0-5 4-8 9-8M56 15c0-3 2-5 6-5" stroke="#bbb" />
          <circle cx="60.500" cy="13.500" r="1.500" fill="#fff" stroke="none" />
          <path d="M70.500 6h2.500l3.500-3v11L73 11h-2.500zM79 6c1 1 1 4 0 5M81 4c3 2 3 7 0 9" />
          <path d="M83.500 2c3 3 3 10 0 13" stroke="#777" />
          <path d="M125 3l12-3 5 12-12 4z" fill="#e84e17" stroke="none" />
          <path d="M137 4c-6-2-8 3-3 4s3 5-4 3" strokeWidth="2" />
          <text x="102" y="14" textAnchor="middle" fill="#fff" stroke="none" className="text-base">A</text>
        </svg>
        <div className="mx-4 text-center leading-[18px]">
          <div>14:02</div>
          <div>2017/8/13</div>
        </div>
        <button type="button" aria-label="notifications" className="mr-3 flex">
          <svg className="h-7 w-7" viewBox="0 0 28 28">
            <path d="M3 4h16v12H10l-3 4v-4H3z" fill="#fff" />
            <path d="M6 7.500h10M6 10h10M6 12.500h7" stroke="#020b10" />
            <circle cx="18.500" cy="19" r="8" fill="#444" stroke="#888" />
            <text x="18.500" y="23" textAnchor="middle" fill="#fff" fontSize="11" fontWeight="700">8</text>
          </svg>
        </button>
        <span className="mr-1 h-full w-px bg-[#555]" />
      </div>
    </footer>
  );
}

const cell = 'flex h-[19px] items-center whitespace-nowrap border border-[#d5d5d5] pl-px';

export default function App() {
  return (
    <div className="relative flex h-screen flex-col overflow-hidden bg-[#f0f0f0] font-['Open_Sans','Noto_Sans_CJK_SC',sans-serif] text-xs leading-4 text-black">
      <header className="flex h-[23px] shrink-0 items-center bg-white">
        <svg className="mx-[2px] h-4 w-4" viewBox="0 0 24 24" fill="none">
          <rect width="24" height="24" rx="4" fill="#0e8ff0" />
          <path d="M16 7c0-4-4-4-4-1v14M4.500 15c-1-2 0-3 3-3H16c4 0 4-4 1-4M8 17c0 4 8 4 8 0" stroke="#fff" strokeWidth="1.800" />
        </svg>
        <h1 className="flex-1 truncate pl-[3px]">
          广联达BIM钢筋算量软件{' '}
          <span className="font-['Roboto','Noto_Sans_CJK_SC',sans-serif] text-[13px]">
            GGJ2013 - [C:\Users\Administrator.PC-20141127NRHM\Desktop\白龙村-2016-08-25-13-27-07(2166版).GGJ12]
          </span>
        </h1>
        <button type="button" aria-label="minimize" className="w-[46px]">
          <svg className="mx-auto h-3 w-3" viewBox="0 0 12 12" stroke="#000"><path d="M1 6.500h10" /></svg>
        </button>
        <button type="button" aria-label="restore" className="w-[46px]">
          <svg className="mx-auto h-3 w-3" viewBox="0 0 12 12" fill="none" stroke="#000"><path d="M1.500 3.500h7v7h-7zM3.500 3V1.500h7v7H9" /></svg>
        </button>
        <button type="button" aria-label="close" className="w-[46px]">
          <svg className="mx-auto h-3 w-3" viewBox="0 0 12 12" stroke="#000"><path d="M1 1l10 10M11 1L1 11" /></svg>
        </button>
      </header>

      {/* floating accelerator ball */}
      <div className="absolute -top-7 left-[101px] flex h-12 w-12 items-end justify-center rounded-full border-2 border-[#d9e8dd] bg-gradient-to-b from-[#2fae52] to-[#3fc463] pb-[3px] font-bold text-white shadow-md">
        68
      </div>

      <div className="flex h-[30px] shrink-0 justify-end gap-1">
        <Bar grip={false} className="w-[186px]">
          <a href="#help" className="pl-7 text-[#006464]">如何快速布置自定义范..</a>
        </Bar>
        <Bar grip={false} className="w-[239px]">
          <button type="button" className="flex items-center gap-1 pl-[3px]">
            <Icon name="user" />
            13907298339
            <span className="pl-[3px]"><Arrow /></span>
          </button>
          <span className="pl-2">造价豆:0</span>
          <button type="button" aria-label="messages" className="pl-2"><Icon name="bell" /></button>
          <span className="ml-auto"><More /></span>
        </Bar>
      </div>

      <div className="flex h-[31px] shrink-0 gap-[3px] pt-px">
        <Bar grip={false} className="w-[150px] pb-[2px]">
          <Tool icon="file" />
          <Tool icon="open" drop />
          <Tool icon="save" />
          <Sep />
          <Tool icon="undo" drop />
          <span className="ml-auto"><More /></span>
        </Bar>
        <Bar grip={false} className="w-[549px] pb-[2px]">
          <Tool icon="define" label="定义" />
          <Tool icon="sigma" label="汇总计算" />
          <Tool icon="cloud" label="云检查" />
          <Tool icon="align" label="平齐板顶" />
          <Tool icon="find" label="查找图元" />
          <Tool icon="glasses" label="查看钢筋量" />
          <Tool icon="batch" label="批量选择" off />
          <span className="ml-auto"><More /></span>
        </Bar>
        <Bar grip={false} className="flex-1 pb-[2px]">
          <div className="flex shrink-0 items-center bg-white pl-[2px]">
            <Icon name="cube" />
            <Combo label="视图" value="三维" className="w-11" />
          </div>
          <Tool icon="topView" label="俯视" drop />
          <Tool icon="orbit" label="动态观察" active />
          <Tool icon="localCube" label="局部三维" off />
          <Sep />
          <Tool icon="fullscreen" label="全屏" />
          <Tool icon="zoom" label="缩放" drop />
          <Tool icon="pan" label="平移" drop />
          <Tool icon="screenRotate" label="屏幕旋转" drop tight />
          <Sep />
          <Tool icon="floors" label="选择楼层" />
          <span className="ml-auto"><More /></span>
        </Bar>
      </div>

      <div className="flex min-h-0 flex-1 gap-1">
        <Sidebar />
        <main className="flex min-w-0 flex-1 flex-col">
          <div className="flex h-[27px] shrink-0">
            <Bar>
              <Tool icon="brush" label="删除" />
              <Sep />
              <Tool icon="copy" label="复制" />
              <Tool icon="mirror" label="镜像" />
              <Sep />
              <Tool icon="move" label="移动" />
              <Tool icon="rotate" label="旋转" />
              <Sep />
              <Tool icon="extend" label="延伸" off />
              <Tool icon="trim" label="修剪" off />
              <Sep />
              <Tool icon="breakIt" label="打断" off />
              <Tool icon="merge" label="合并" off />
              <Tool icon="split" label="分割" off />
              <Sep />
              <Tool icon="alignTo" label="对齐" drop tight />
              <Tool icon="offset" label="偏移" off />
              <Tool icon="stretch" label="拉伸" off />
              <Sep />
              <Tool icon="grip" label="设置夹点" off />
            </Bar>
          </div>
          <div className="flex h-[27px] shrink-0 gap-[73px]">
            <Bar>
              <div className="flex gap-[3px] pl-px">
                <Combo label="楼层" value="基础层" className="w-[58px]" />
                <Combo label="构件类型" value="柱" className="w-[69px]" />
                <Combo label="构件种类" value="框柱" className="w-[69px]" />
                <Combo label="构件" value="KZ-1" className="w-[69px]" />
              </div>
              <Sep />
              <Tool icon="props" label="属性" />
              <Tool icon="editBar" label="编辑钢筋" />
              <Tool icon="list" label="构件列表" />
              <Tool icon="pick" label="拾取构件" />
            </Bar>
            <Bar>
              <Tool icon="twoPoint" label="两点" />
              <Tool icon="parallel" label="平行" />
              <Tool icon="pointAngle" label="点角" drop />
              <Tool icon="threePoint" label="三点辅轴" drop />
              <Tool icon="brush" label="删除辅轴" />
              <Tool icon="dimension" label="尺寸标注" drop />
            </Bar>
          </div>
          <div className="flex h-7 shrink-0 gap-px">
            <Bar>
              <Tool icon="cursor" label="选择" drop />
              <Sep />
              <Tool icon="point" label="点" />
              <Tool icon="rotatePoint" label="旋转点" />
              <Sep />
              <Tool icon="smart" label="智能布置" drop tight />
              <Sep />
              <Tool icon="inPlace" label="原位标注" />
              <Tool icon="columnTable" label="图元柱表" />
              <Tool icon="columnEnd" label="调整柱端头" />
              <Tool icon="byWall" label="按墙位置绘制柱" drop />
              <Tool icon="cornerColumn" label="自动判断边角柱" />
              <Tool icon="checkMark" label="查改标注" drop />
            </Bar>
            <Bar className="w-8" />
          </div>
          <Viewport />
          <div className="flex h-[31px] shrink-0">
            <Bar>
              <Tool icon="ortho" label="正交" />
              <Tool icon="snap" label="对象捕捉" active />
              <Tool icon="dynInput" label="动态输入" />
            </Bar>
            <Bar>
              <Tool icon="cross" label="交点" />
              <Tool icon="perpendicular" label="垂点" active />
              <Tool icon="midpoint" label="中点" active />
              <Tool icon="vertex" label="顶点" />
              <Tool icon="coord" label="坐标" />
            </Bar>
            <Bar className="text-[#808080]">
              <Combo label="偏移方式" value="不偏移" className="w-[58px] text-black" />
              <Sep />
              <span className="w-[21px] pl-[2px] text-[13px]">X=</span>
              <Spin label="X" value="0" className="w-[58px]" />
              <span className="w-7 pl-[2px]">mm</span>
              <span className="w-[18px] text-[13px]">Y=</span>
              <Spin label="Y" value="0" className="w-[58px]" />
              <span className="w-[22px] pl-[2px]">mm</span>
              <Sep />
              <label className="flex items-center gap-2 px-[3px] text-black">
                <input type="checkbox" className="h-3 w-3 appearance-none border border-[#a0a0a0] bg-[#f5f5f5]" />
                旋转
              </label>
              <Spin label="角度" value="0.000" className="w-[68px]" />
              <span className="px-[3px]">°</span>
            </Bar>
          </div>
        </main>
      </div>

      <div className={clsx('flex h-[22px] shrink-0 items-end gap-[2px] bg-gradient-to-b from-[#f4f4f4] to-[#fcfcfc] pb-px', MONO)}>
        <span className={clsx(cell, 'w-[148px]')}>X=113907 Y=23100</span>
        <span className={clsx(cell, 'w-[78px]')}><span className="text-xs">层高</span>:3.55m</span>
        <span className={clsx(cell, 'w-[98px]')}><span className="text-xs">底标高</span>:-3.58m</span>
        <span className={clsx(cell, 'w-12')}>0</span>
        <span className={clsx(cell, 'flex-1')} />
        <span className={clsx(cell, 'w-[70px]')}>468.4 FPS</span>
      </div>

      <Taskbar />
    </div>
  );
}
